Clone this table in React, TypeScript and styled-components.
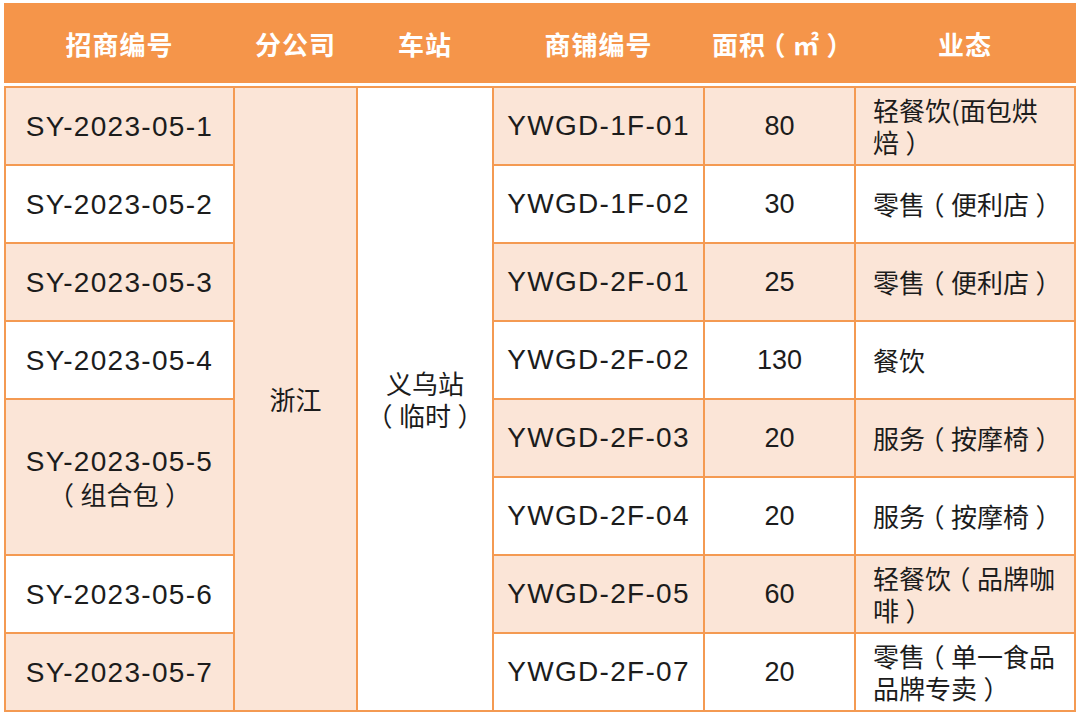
import React from "react";
import styled, { createGlobalStyle } from "styled-components";

const GlobalStyle = createGlobalStyle`
  * { box-sizing: border-box; }
  body {
    margin: 0;
    background: #fff;
    font-family: "Liberation Sans", "Noto Sans CJK SC", sans-serif;
    color: #1c1c1c;
  }
`;

const COLUMNS = "227px 121px 134px 209px 149px 218px";

const Page = styled.div`
  padding: 3px 0 0 4px;
  width: 1080px;
`;

const HeaderRow = styled.div`
  display: grid;
  grid-template-columns: ${COLUMNS};
  column-gap: 2px;
  padding: 0 2px;
  width: 1072px;
  height: 80px;
  background: #f5954a;
`;

const HeadCell = styled.div`
  display: flex;
  align-items: center;
  justify-content: center;
  color: #fff;
  font-family: "Noto Sans CJK SC", sans-serif;
  font-weight: 700;
  font-size: 26px;
  letter-spacing: 1px;
  white-space: nowrap;
`;

const Body = styled.div`
  display: grid;
  grid-template-columns: ${COLUMNS};
  grid-auto-rows: 76px;
  gap: 2px;
  padding: 2px;
  margin-top: 3px;
  width: 1072px;
  background: #f49a52;
`;

const Cell = styled.div<{ $shade?: boolean; $span?: number; $left?: boolean }>`
  grid-row: span ${({ $span }) => $span ?? 1};
  display: flex;
  align-items: center;
  justify-content: ${({ $left }) => ($left ? "flex-start" : "center")};
  text-align: ${({ $left }) => ($left ? "left" : "center")};
  padding: ${({ $left }) => ($left ? "0 17px" : "0 4px")};
  background: ${({ $shade }) => ($shade ? "#fbe5d7" : "#ffffff")};
  font-size: 26px;
  line-height: 32px;
  font-family: "Noto Sans CJK SC", sans-serif;
`;

const Code = styled.span`
  font-family: "Liberation Sans", "Noto Sans CJK SC", sans-serif;
  font-size: 28px;
  letter-spacing: 1.3px;
  white-space: nowrap;
`;

const Num = styled.span`
  font-family: "Liberation Sans", sans-serif;
  font-size: 27px;
`;

// full-width brackets sit centred in their box in the reference
const Paren = styled.span`
  font-feature-settings: "halt" 1;
  padding: 0 0.25em;
`;

const Zh: React.FC<{ text: string }> = ({ text }) => (
  <>
    {text.split(/([（）])/).map((part, i) =>
      part === "（" || part === "）" ? <Paren key={i}>{part}</Paren> : part
    )}
  </>
);

type Shop = { code: string; area: string; kind: string };

const shops: Shop[] = [
  { code: "YWGD-1F-01", area: "80", kind: "轻餐饮(面包烘焙）" },
  { code: "YWGD-1F-02", area: "30", kind: "零售（便利店）" },
  { code: "YWGD-2F-01", area: "25", kind: "零售（便利店）" },
  { code: "YWGD-2F-02", area: "130", kind: "餐饮" },
  { code: "YWGD-2F-03", area: "20", kind: "服务（按摩椅）" },
  { code: "YWGD-2F-04", area: "20", kind: "服务（按摩椅）" },
  { code: "YWGD-2F-05", area: "60", kind: "轻餐饮（品牌咖啡）" },
  { code: "YWGD-2F-07", area: "20", kind: "零售（单一食品品牌专卖）" },
];

type Bid = { row: number; span: number; shade: boolean; code: string; note?: string };

const bids: Bid[] = [
  { row: 0, span: 1, shade: true, code: "SY-2023-05-1" },
  { row: 1, span: 1, shade: false, code: "SY-2023-05-2" },
  { row: 2, span: 1, shade: true, code: "SY-2023-05-3" },
  { row: 3, span: 1, shade: false, code: "SY-2023-05-4" },
  { row: 4, span: 2, shade: true, code: "SY-2023-05-5", note: "（组合包）" },
  { row: 6, span: 1, shade: false, code: "SY-2023-05-6" },
  { row: 7, span: 1, shade: true, code: "SY-2023-05-7" },
];

const headers = ["招商编号", "分公司", "车站", "商铺编号", "面积（㎡）", "业态"];

const App: React.FC = () => {
  return (
    <Page>
      <GlobalStyle />
      <HeaderRow>
        {headers.map((h) => (
          <HeadCell key={h}>
            <Zh text={h} />
          </HeadCell>
        ))}
      </HeaderRow>
      <Body>
        {shops.map((shop, i) => {
          const bid = bids.find((b) => b.row === i);
          const shade = i % 2 === 0;
          return (
            <React.Fragment key={shop.code}>
              {bid && (
                <Cell $shade={bid.shade} $span={bid.span}>
                  <div>
                    <Code>{bid.code}</Code>
                    {bid.note && (
                      <div>
                        <Zh text={bid.note} />
                      </div>
                    )}
                  </div>
                </Cell>
              )}
              {i === 0 && (
                <>
                  <Cell $shade $span={8}>浙江</Cell>
                  <Cell $span={8}>
                    <div>
                      义乌站
                      <br />
                      <Zh text="（临时）" />
                    </div>
                  </Cell>
                </>
              )}
              <Cell $shade={shade}>
                <Code>{shop.code}</Code>
              </Cell>
              <Cell $shade={shade}>
                <Num>{shop.area}</Num>
              </Cell>
              <Cell $shade={shade} $left>
                <div>
                  <Zh text={shop.kind} />
                </div>
              </Cell>
            </React.Fragment>
          );
        })}
      </Body>
    </Page>
  );
};

export default App;
